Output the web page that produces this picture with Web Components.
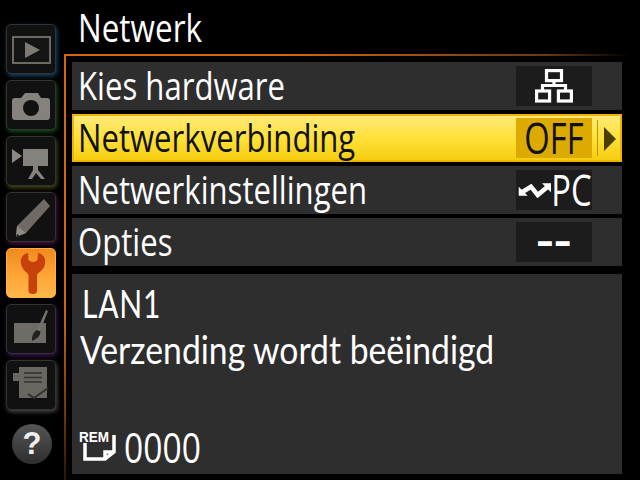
<!DOCTYPE html>
<html>
<head>
<meta charset="utf-8">
<title>Netwerk</title>
<style>
  html, body { margin: 0; height: 100%; background: #000; overflow: hidden; }
  body { font-family: "Open Sans", "Noto Sans", sans-serif; color: #fff; }
</style>
</head>
<body>
<nikon-screen>
  <tab-rail slot="rail">
    <rail-tab glow="#12486e"><svg viewBox="0 0 48 48"><rect x="6" y="12" width="37" height="26" fill="#141414" stroke="#6d6a66" stroke-width="2"/><path d="M18 17 L33 25 L18 33Z" fill="#7d7a75"/></svg></rail-tab>
    <rail-tab glow="#14501a"><svg viewBox="0 0 48 48"><path d="M5 20 Q5 17 8 17 H14 L18 12 H31 L34 17 H40 Q43 17 43 20 V36 Q43 39 40 39 H8 Q5 39 5 36Z" fill="#85817c"/><circle cx="24" cy="27" r="8" fill="#111"/></svg></rail-tab>
    <rail-tab glow="#474a12"><svg viewBox="0 0 48 48"><path d="M5 12 L15 19 L5 26Z" fill="#8b8883"/><rect x="16" y="12" width="25" height="17" fill="#85817c"/><path d="M26 29 h5 v4 l7 9 h-4 l-5 -6 l-4 6 h-4 l5 -9Z" fill="#85817c"/></svg></rail-tab>
    <rail-tab glow="#4a1440"><svg viewBox="0 0 48 48"><path d="M37 6 L43 13 L19 40 L9 44 L10 33Z" fill="#6f6a65"/><path d="M10 33 L19 40 L9 44Z" fill="#8f8b85"/><path d="M10 41 L9 44 L13 43Z" fill="#222"/></svg></rail-tab>
    <rail-tab active><svg viewBox="0 0 48 48"><path d="M21 4 C15 5 13 10 14 15 C15 21 20 23 21.500 26 V42 Q21.500 45 26 45 Q30 45 30 42 V26 C31.500 23 37 21 38 15 C39 10 37 5 31 4 L30.500 11 Q26 15 21.500 11Z" fill="#c8410a"/></svg></rail-tab>
    <rail-tab glow="#3a1458"><svg viewBox="0 0 48 48"><rect x="7" y="18" width="32" height="20" fill="#6f6c68"/><path d="M39 5 L41 6 L33 26 L30 25Z" fill="#77736d"/><path d="M29.500 25 L33.500 26.500 Q33 33 25 36 Q24 30 29.500 25Z" fill="#23211f"/></svg></rail-tab>
    <rail-tab glow="#4a4a4a"><svg viewBox="0 0 48 48"><rect x="6" y="12" width="6" height="8" fill="#6a6763"/><rect x="12" y="6" width="28" height="31" fill="#6a6763"/><path d="M17 12 H35 M17 16.500 H35 M17 21 H35" stroke="#33312f" stroke-width="1.500"/><path d="M21 33 L27 37 L41 27" fill="none" stroke="#33312f" stroke-width="2"/></svg></rail-tab>
    <help-button>?</help-button>
  </tab-rail>
  <span slot="title">Netwerk</span>
  <menu-row label="Kies hardware"><svg width="38" height="34" viewBox="0 0 38 34" fill="none" stroke="#fff" stroke-width="3.200"><rect x="11.500" y="1.600" width="15" height="10"/><path d="M19 11 V17 M7.500 23 V16.500 H30.500 V23"/><rect x="1.600" y="22" width="13" height="10"/><rect x="23.400" y="22" width="13" height="10"/></svg></menu-row>
  <menu-row label="Netwerkverbinding" selected><value-text>OFF</value-text></menu-row>
  <menu-row label="Netwerkinstellingen"><svg width="33" height="17" viewBox="-1 -1 33 17" fill="#fff"><path d="M3.700 8.700 L12 3.700 L18.700 12 L28.700 3.700" fill="none" stroke="#fff" stroke-width="4.500"/><path d="M-.3 3.700 V12.700 H8.700Z M32 .3 V9.300 L23 .3Z"/></svg><value-text style="margin:0 -8px 0 -6px">PC</value-text></menu-row>
  <menu-row label="Opties"><value-text style="letter-spacing:2px;font-weight:700;margin-bottom:6px">&#8211;&#8211;</value-text></menu-row>
  <info-panel>
    <span>LAN1</span>
    <span slot="msg">Verzending wordt beëindigd</span>
    <span slot="count">0000</span>
  </info-panel>
</nikon-screen>
<script>
const squeeze = `display:inline-block;transform-origin:0 50%;white-space:nowrap;`;

class NikonScreen extends HTMLElement {
  constructor() {
    super();
    this.attachShadow({ mode: 'open' });
    this.shadowRoot.innerHTML = `
      <style>
        :host { display: flex; width: 640px; height: 480px; background: #000; }
        .rail { width: 64px; flex: none; }
        .main { flex: 1; display: flex; flex-direction: column; }
        .title { height: 54px; padding-left: 14px; box-sizing: border-box; font-size: 39px; line-height: 54px; }
        .title > span { ${squeeze} transform: scaleX(.807); }
        .frame { flex: 1; display: flex; flex-direction: column; gap: 4px; padding: 8px 18px 6px 8px; position: relative; }
        .frame::before { content: ''; position: absolute; left: 0; top: 0; right: 10px; height: 2px; background: linear-gradient(90deg, #d4660f, #d4660f 40%, #6a3a14 85%, #000); }
        .frame::after { content: ''; position: absolute; left: 0; top: 0; bottom: 0; width: 2px; background: linear-gradient(180deg, #d4660f, #d4660f 60%, #5a2c08 90%, #2a1504); }
      </style>
      <div class="rail"><slot name="rail"></slot></div>
      <div class="main">
        <div class="title"><span><slot name="title"></slot></span></div>
        <div class="frame"><slot></slot></div>
      </div>`;
  }
}

class TabRail extends HTMLElement {
  constructor() {
    super();
    this.attachShadow({ mode: 'open' });
    this.shadowRoot.innerHTML = `
      <style>
        :host { display: flex; flex-direction: column; align-items: flex-start; gap: 6px; padding: 24px 0 0 6px; }
      </style>
      <slot></slot>`;
  }
}

class RailTab extends HTMLElement {
  constructor() {
    super();
    this.attachShadow({ mode: 'open' });
    const glow = this.getAttribute('glow') || 'transparent';
    const active = this.hasAttribute('active');
    this.shadowRoot.innerHTML = `
      <style>
        :host { display: block; width: 50px; height: 50px; box-sizing: border-box; border-radius: 5px;
          border: 1px solid ${active ? '#ffb040' : '#333'};
          background: ${active ? 'linear-gradient(180deg,#f08a20,#ffa838 60%,#ffb64a)' : '#111'};
          box-shadow: 1px 2px 4px ${glow}; }
        svg { display: block; width: 48px; height: 48px; }
      </style>
      <slot></slot>`;
  }
}

class HelpButton extends HTMLElement {
  constructor() {
    super();
    this.attachShadow({ mode: 'open' });
    this.shadowRoot.innerHTML = `
      <style>
        :host { display: flex; align-items: center; justify-content: center; width: 40px; height: 40px; margin: 8px 0 0 6px;
          border-radius: 50%; background: linear-gradient(180deg,#555,#2e2e2e); color: #eee;
          font: bold 31px "Liberation Sans", sans-serif; }
      </style>
      <slot></slot>`;
  }
}

class MenuRow extends HTMLElement {
  constructor() {
    super();
    this.attachShadow({ mode: 'open' });
    const selected = this.hasAttribute('selected');
    this.shadowRoot.innerHTML = `
      <style>
        :host { display: flex; align-items: center; height: 48px; box-sizing: border-box; padding-left: 6px;
          background: #2e2e2e; position: relative; }
        :host([selected]) { background: linear-gradient(180deg,#ffe978,#ffe13a 50%,#f5cd10); color: #111;
          border: 2px solid #f0b400; padding-left: 4px; }
        .label { ${squeeze} font-size: 39px; line-height: 45px; margin-bottom: 3px; transform: scaleX(.798); flex: 1; }
        .value { display: flex; align-items: center; justify-content: center; width: 76px; height: 40px; margin-right: 30px;
          background: ${selected ? '#dcaa00' : '#1c1c1c'}; overflow: hidden; }
        :host([selected]) .value { margin-right: 28px; }
        .arrow { position: absolute; right: 4px; top: 11px; width: 0; height: 0;
          border-left: 12px solid #4a3e00; border-top: 12px solid transparent; border-bottom: 12px solid transparent; }
        .sep { position: absolute; right: 22px; top: 4px; bottom: 4px; width: 1px; background: #b89500; }
      </style>
      <span class="label">${this.getAttribute('label')}</span>
      <div class="value"><slot></slot></div>
      ${selected ? '<div class="sep"></div><div class="arrow"></div>' : ''}`;
  }
}

class ValueText extends HTMLElement {
  constructor() {
    super();
    this.attachShadow({ mode: 'open' });
    this.shadowRoot.innerHTML = `
      <style>
        :host { display: block; font-size: 43px; line-height: 40px; transform: scaleX(.76); transform-origin: 50% 50%; white-space: nowrap; text-align: center; }
      </style>
      <slot></slot>`;
  }
}

class InfoPanel extends HTMLElement {
  constructor() {
    super();
    this.attachShadow({ mode: 'open' });
    this.shadowRoot.innerHTML = `
      <style>
        :host { display: flex; flex-direction: column; margin-top: 4px; height: 200px; box-sizing: border-box;
          background: #2e2e2e; padding: 6px 0 0 8px; }
        .line { ${squeeze} transform: scaleX(.887); font-family: Lato, "Open Sans", sans-serif; font-size: 38px; line-height: 46px; }
        .lan { margin-left: 2px; letter-spacing: 1px; transform: scaleX(.79); }
        .spacer { flex: 1; }
        .foot { display: flex; align-items: flex-end; height: 54px; padding-bottom: 9px; box-sizing: border-box; }
        .rem { position: relative; width: 44px; height: 34px; flex: none; }
        .rem b { position: absolute; left: -1px; top: -2px; font: bold 15px/16px "Liberation Sans", sans-serif; transform-origin: 0 0; transform: scaleX(.9); }
        .rem svg { position: absolute; left: 0; top: 0; }
        .count { ${squeeze} font-size: 42px; line-height: 38px; margin-bottom: -1px; transform: scaleX(.8); }
      </style>
      <span class="line lan"><slot></slot></span>
      <span class="line"><slot name="msg"></slot></span>
      <div class="spacer"></div>
      <div class="foot">
        <div class="rem"><svg width="38" height="34" viewBox="0 0 38 34" fill="none" stroke="#fff" stroke-width="3.500"><path d="M5 12 V28 H25 L34 21 V4 M25 28 V21 H34"/></svg><b>REM</b></div>
        <span class="count"><slot name="count"></slot></span>
      </div>`;
  }
}

customElements.define('nikon-screen', NikonScreen);
customElements.define('tab-rail', TabRail);
customElements.define('rail-tab', RailTab);
customElements.define('help-button', HelpButton);
customElements.define('menu-row', MenuRow);
customElements.define('value-text', ValueText);
customElements.define('info-panel', InfoPanel);
</script>
</body>
</html>
